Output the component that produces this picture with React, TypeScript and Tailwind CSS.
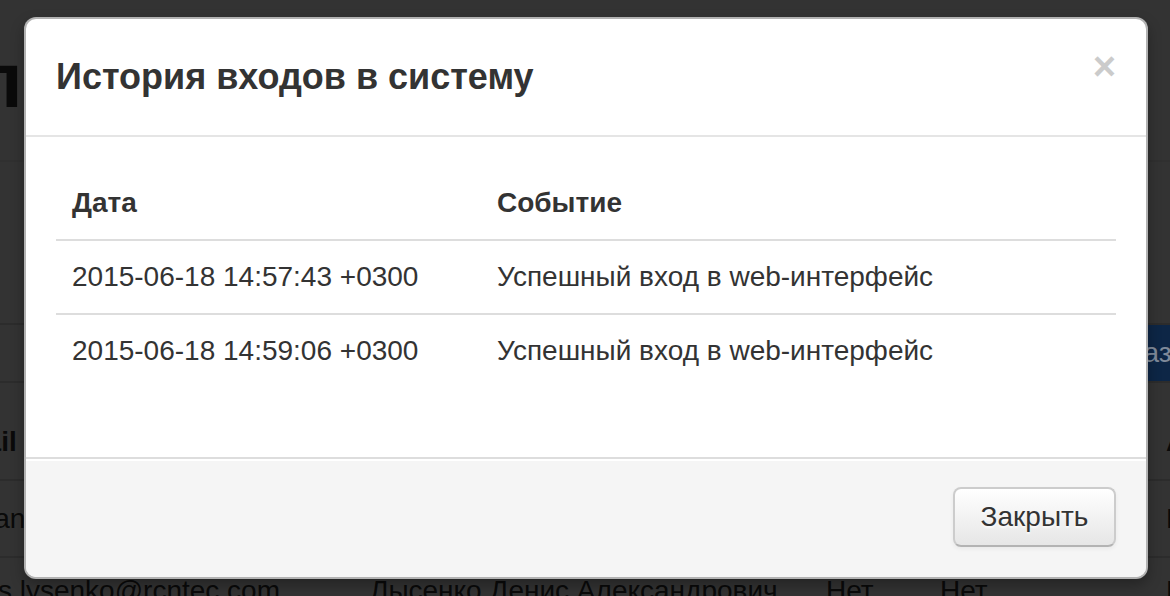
import React from "react";

const font = { fontFamily: '"Liberation Sans", Arial, Helvetica, sans-serif' };

export default function App() {
  return (
    <div
      className="relative w-[1170px] h-[596px] overflow-hidden bg-white text-[#333]"
      style={font}
    >
      {/* background page */}
      <div className="flex flex-col">
        <div className="h-[162px] border-b-2 border-[#eee] flex items-start">
          <h1 className="ml-[-24px] mt-[40px] text-[77px] leading-[80px] font-bold text-[#333] whitespace-nowrap">
            пс
          </h1>
        </div>
        <div className="h-[161px]" />
        <div className="h-[60px] border-y-2 border-[#ddd] flex justify-end">
          <div className="relative z-10 w-[200px] shrink-0 mr-[-100px] bg-[#0d2646] text-[#7f8a9a] text-[28px] leading-[56px] pl-[25px] whitespace-nowrap">
            Показать
          </div>
        </div>
        <div className="h-[98px] border-b-2 border-[#ddd] flex items-end pb-[16px] text-[28px] font-bold whitespace-nowrap">
          <span className="ml-[-58px] w-[428px] shrink-0">Email</span>
          <span className="w-[456px] shrink-0">ФИО</span>
          <span className="w-[114px] shrink-0">Адм.</span>
          <span className="w-[226px] shrink-0">Блок.</span>
          <span className="shrink-0">Акт.</span>
        </div>
        <div className="h-[77px] border-b-2 border-[#ddd] flex items-center text-[28px] whitespace-nowrap">
          <span className="ml-[-54px] w-[424px] shrink-0">roman.petrov@rcntec.com</span>
          <span className="w-[456px] shrink-0">Петров Роман Игоревич</span>
          <span className="w-[114px] shrink-0">Нет</span>
          <span className="w-[226px] shrink-0">Нет</span>
          <span className="shrink-0">Нет</span>
        </div>
        <div className="h-[77px] flex items-start pt-[12px] text-[28px] whitespace-nowrap">
          <span className="ml-[-55px] w-[425px] shrink-0">denis.lysenko@rcntec.com</span>
          <span className="w-[456px] shrink-0">Лысенко Денис Александрович</span>
          <span className="w-[114px] shrink-0">Нет</span>
          <span className="w-[226px] shrink-0">Нет</span>
          <span className="shrink-0">Нет</span>
        </div>
      </div>

      {/* backdrop */}
      <div className="absolute inset-0 bg-black/80" />

      {/* modal */}
      <div className="absolute z-20 left-[24px] top-[17px] w-[1124px] h-[562px] border-2 border-black/30 rounded-[12px] bg-white shadow-[0_6px_14px_rgba(0,0,0,0.3)] flex flex-col overflow-hidden">
        <div className="h-[118px] shrink-0 border-b-2 border-[#e5e5e5] px-[30px] flex items-center">
          <h3 className="flex-1 text-[36px] leading-[40px] font-bold text-[#333]">
            История входов в систему
          </h3>
          <span className="self-start mt-[27px] text-[40px] leading-[40px] font-bold text-black opacity-20 [text-shadow:0_2px_0_#fff] cursor-pointer">
            ×
          </span>
        </div>
        <div className="flex-1 px-[30px] pt-[30px]">
          <table className="w-full border-collapse text-[28px] leading-[40px] text-[#333]">
            <thead>
              <tr>
                <th className="w-[425px] text-left font-bold px-[16px] py-[16px]">Дата</th>
                <th className="text-left font-bold px-[16px] py-[16px]">Событие</th>
              </tr>
            </thead>
            <tbody>
              <tr>
                <td className="border-t-2 border-[#ddd] px-[16px] py-[16px]">2015-06-18 14:57:43 +0300</td>
                <td className="border-t-2 border-[#ddd] px-[16px] py-[16px]">Успешный вход в web-интерфейс</td>
              </tr>
              <tr>
                <td className="border-t-2 border-[#ddd] px-[16px] py-[16px]">2015-06-18 14:59:06 +0300</td>
                <td className="border-t-2 border-[#ddd] px-[16px] py-[16px]">Успешный вход в web-интерфейс</td>
              </tr>
            </tbody>
          </table>
        </div>
        <div className="h-[120px] shrink-0 border-t-2 border-[#ddd] bg-[#f5f5f5] shadow-[inset_0_2px_0_#fff] px-[30px] pt-[28px] flex justify-end items-start">
          <button className="h-[60px] w-[163px] border-2 border-[#ccc] border-b-[#b3b3b3] rounded-[8px] bg-gradient-to-b from-white to-[#e6e6e6] text-[28px] leading-[40px] text-[#333] [text-shadow:0_2px_2px_rgba(255,255,255,0.75)] shadow-[inset_0_2px_0_rgba(255,255,255,0.2),0_2px_4px_rgba(0,0,0,0.05)]">
            Закрыть
          </button>
        </div>
      </div>
    </div>
  );
}
